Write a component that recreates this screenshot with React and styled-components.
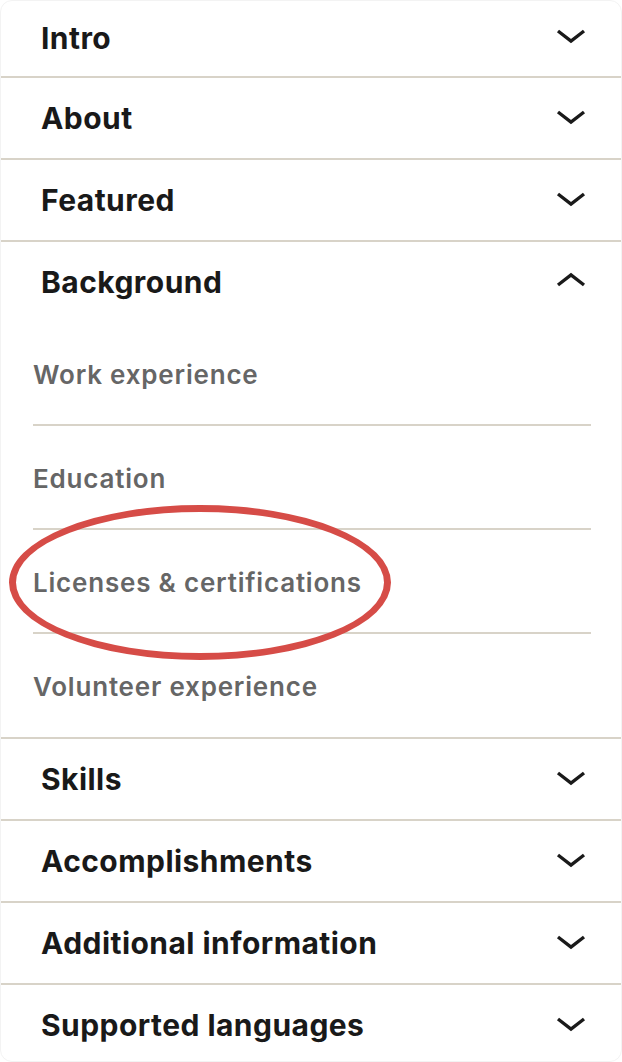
import { useState } from "react"
import styled, { createGlobalStyle } from "styled-components"

const GlobalStyle = createGlobalStyle`
	html, body {
		margin: 0;
		padding: 0;
		background: #ffffff;
	}
	body {
		font-family: "Inter", "Roboto", "Liberation Sans", sans-serif;
		-webkit-font-smoothing: antialiased;
	}
`

const sections = [
	{ title: "Intro" },
	{ title: "About" },
	{ title: "Featured" },
	{
		title: "Background",
		items: [
			"Work experience",
			"Education",
			"Licenses & certifications",
			"Volunteer experience",
		],
	},
	{ title: "Skills" },
	{ title: "Accomplishments" },
	{ title: "Additional information" },
	{ title: "Supported languages" },
]

const Chevron = ({ up }) => (
	<ChevronSvg viewBox="0 0 32 16" $up={up}>
		<polyline
			points="3,3 16,13 29,3"
			fill="none"
			stroke="#1a1a1a"
			strokeWidth="3.4"
			strokeLinecap="butt"
			strokeLinejoin="miter"
		/>
	</ChevronSvg>
)

const Section = ({ title, items, open, onToggle }) => {
	return (
		<StyledSection>
			<Header onClick={onToggle}>
				<Title>{title}</Title>
				<Chevron up={open} />
			</Header>
			{open && items && (
				<SubList>
					{items.map((item) => (
						<SubItem key={item}>
							<SubLabel>{item}</SubLabel>
							{item === "Licenses & certifications" && <Highlight />}
						</SubItem>
					))}
				</SubList>
			)}
		</StyledSection>
	)
}

const App = () => {
	const [openTitle, setOpenTitle] = useState("Background")

	return (
		<>
			<GlobalStyle />
			<Card>
				{sections.map((s) => (
					<Section
						key={s.title}
						title={s.title}
						items={s.items}
						open={openTitle === s.title}
						onToggle={() =>
							setOpenTitle(openTitle === s.title ? null : s.title)
						}
					/>
				))}
			</Card>
		</>
	)
}

const Card = styled.div`
	box-sizing: border-box;
	width: 622px;
	height: 1062px;
	overflow: hidden;
	background: #ffffff;
	border: 1px solid #f3f3f3;
	border-radius: 12px;
`

const Header = styled.div`
	display: flex;
	align-items: center;
	justify-content: space-between;
	height: 80px;
	padding: 0 34px 0 40px;
	cursor: pointer;
`

const StyledSection = styled.div`
	border-bottom: 2px solid #d8d3c8;
	&:first-child ${Header} {
		height: 75px;
		padding-bottom: 2px;
		box-sizing: border-box;
	}
	&:last-child {
		border-bottom: none;
	}
`

const Title = styled.h2`
	margin: 0;
	font-size: 30px;
	font-weight: 700;
	color: #191919;
	letter-spacing: 0.45px;
`

const ChevronSvg = styled.svg`
	width: 32px;
	height: 16px;
	margin-bottom: ${({ $up }) => ($up ? "4px" : "3px")};
	transform: ${({ $up }) => ($up ? "rotate(180deg)" : "none")};
`

const SubList = styled.div`
	display: flex;
	flex-direction: column;
	padding: 0 30px 1px 32px;
`

const SubItem = styled.div`
	position: relative;
	display: flex;
	align-items: center;
	height: 102px;
	border-bottom: 2px solid #d8d3c8;
	&:last-child {
		border-bottom: none;
	}
`

const SubLabel = styled.span`
	font-size: 26px;
	font-weight: 600;
	color: #666666;
	letter-spacing: 0.8px;
	margin-top: 2px;
`

const Highlight = styled.div`
	position: absolute;
	left: -24px;
	top: -25px;
	width: 368px;
	height: 141px;
	border: 7px solid #d64c47;
	border-radius: 50%;
	pointer-events: none;
`

export default App
